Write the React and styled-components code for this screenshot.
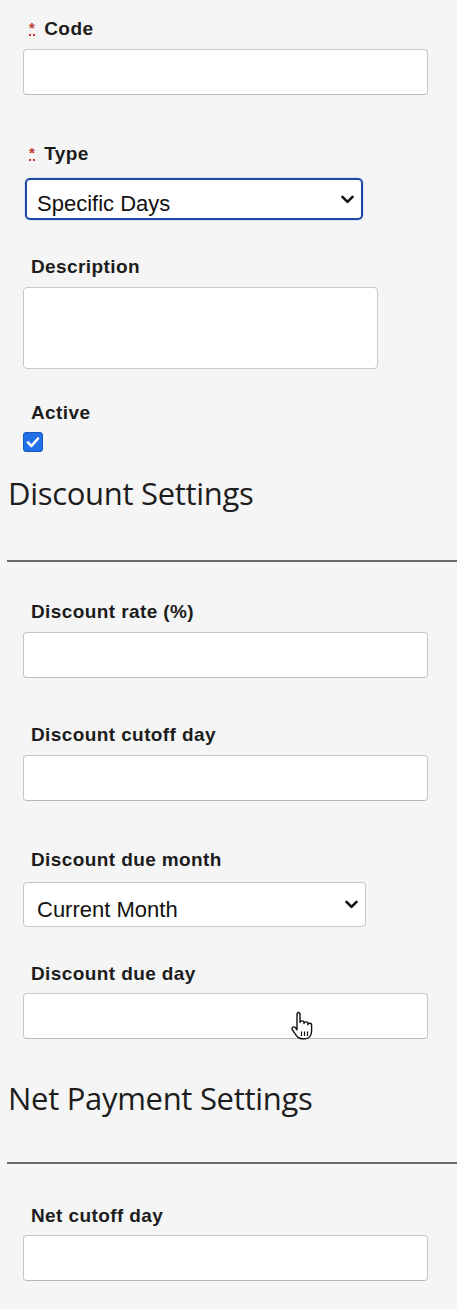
import React from 'react';
import styled, { createGlobalStyle } from 'styled-components';

const GlobalStyle = createGlobalStyle`
  html, body {
    margin: 0;
    padding: 0;
    background: #f5f5f5;
  }
  * {
    box-sizing: border-box;
  }
`;

function Chevron() {
  return (
    <svg width="13" height="9" viewBox="0 0 13 9">
      <polyline points="1.5,1.8 6.5,6.8 11.5,1.8" fill="none" stroke="#111" strokeWidth="2.6" strokeLinecap="round" strokeLinejoin="round" />
    </svg>
  );
}

function HandCursor() {
  return (
    <svg width="23" height="30" viewBox="0 0 23 30">
      <path
        d="M7 1.5c1.2 0 2 .9 2 2v8c0-1 .9-1.6 2-1.6s2 .6 2 1.6v1c0-1 .9-1.6 2-1.6s2 .6 2 1.6v1.2c0-.9.8-1.5 1.8-1.5s1.8.6 1.8 1.6v6.4c0 4.2-2.6 7.6-6.4 7.6h-3.4c-2.6 0-4.2-1.4-5.6-3.4l-3.8-5.6c-.6-.9-.4-2.1.5-2.6.9-.5 2-.2 2.6.6l1.5 2V3.5c0-1.1.8-2 2-2z"
        fill="#fff"
        stroke="#111"
        strokeWidth="1.4"
        strokeLinejoin="round"
      />
      <line x1="10.5" y1="20.5" x2="10.5" y2="25" stroke="#111" strokeWidth="1.2" />
      <line x1="13.5" y1="20.5" x2="13.5" y2="25" stroke="#111" strokeWidth="1.2" />
      <line x1="16.5" y1="20.5" x2="16.5" y2="25" stroke="#111" strokeWidth="1.2" />
    </svg>
  );
}

export default function App() {
  return (
    <>
      <GlobalStyle />
      <Page>
        <Field $mb={48}>
          <Label>
            <Req title="required">*</Req>Code
          </Label>
          <TextInput />
        </Field>

        <Field $mb={36}>
          <Label $gap={13}>
            <Req title="required">*</Req>Type
          </Label>
          <SelectBox $focused $width={338} $height={42} $left={25}>
            <SelectText>Specific Days</SelectText>
            <Chevron />
          </SelectBox>
        </Field>

        <Field $mb={33}>
          <Label>Description</Label>
          <TextArea />
        </Field>

        <Field $mb={20}>
          <Label $gap={8}>Active</Label>
          <CheckBox>
            <svg width="14" height="12" viewBox="0 0 14 12">
              <polyline points="2,6.5 5.5,10 12,2.5" fill="none" stroke="#fff" strokeWidth="2.6" strokeLinecap="round" strokeLinejoin="round" />
            </svg>
          </CheckBox>
        </Field>

        <Heading>Discount Settings</Heading>
        <Rule $mt={46} $mb={39} />

        <Field $mb={46}>
          <Label>Discount rate (%)</Label>
          <TextInput />
        </Field>

        <Field $mb={48}>
          <Label>Discount cutoff day</Label>
          <TextInput />
        </Field>

        <Field $mb={36}>
          <Label $gap={11}>Discount due month</Label>
          <SelectBox $width={343} $height={45} $left={23}>
            <SelectText>Current Month</SelectText>
            <Chevron />
          </SelectBox>
        </Field>

        <Field $mb={38}>
          <Label $gap={8}>Discount due day</Label>
          <InputWrap>
            <TextInput />
            <Cursor>
              <HandCursor />
            </Cursor>
          </InputWrap>
        </Field>

        <Heading>Net Payment Settings</Heading>
        <Rule $mt={43} $mb={41} />

        <Field $mb={28}>
          <Label $gap={8}>Net cutoff day</Label>
          <TextInput />
        </Field>
      </Page>
    </>
  );
}

const Page = styled.div`
  display: flex;
  flex-direction: column;
  width: 457px;
  min-height: 1309px;
  padding-top: 18px;
  font-family: "Liberation Sans", Arial, sans-serif;
  color: #1b1b1b;
`;

const Field = styled.div`
  display: flex;
  flex-direction: column;
  margin-bottom: ${(p) => p.$mb || 0}px;
`;

const Label = styled.label`
  display: flex;
  align-items: flex-start;
  height: 22px;
  line-height: 22px;
  padding-left: 31px;
  margin-bottom: ${(p) => (p.$gap != null ? p.$gap : 9)}px;
  font-size: 19px;
  font-weight: 700;
  letter-spacing: 0.4px;
  color: #1c1c1c;
`;

const Req = styled.abbr`
  margin-left: -2px;
  margin-right: 9px;
  font-size: 15px;
  line-height: 20px;
  color: #c23934;
  text-decoration: none;
  border-bottom: 2px dotted #c23934;
  height: 18px;
  cursor: help;
`;

const TextInput = styled.input`
  display: block;
  width: 405px;
  height: 46px;
  margin-left: 23px;
  border: 1px solid #c6c6c6;
  border-bottom-color: #b9b9b9;
  border-radius: 4px;
  background: #ffffff;
  font-family: "Liberation Sans", Arial, sans-serif;
  font-size: 20px;
  outline: none;
`;

const TextArea = styled.textarea`
  display: block;
  width: 355px;
  height: 82px;
  margin: 0 0 0 23px;
  border: 1px solid #c9c9c9;
  border-radius: 4px;
  background: #ffffff;
  resize: none;
  outline: none;
`;

const SelectBox = styled.div`
  display: flex;
  align-items: center;
  justify-content: space-between;
  width: ${(p) => p.$width}px;
  height: ${(p) => p.$height}px;
  margin-left: ${(p) => p.$left}px;
  padding: 0 7px 0 ${(p) => (p.$focused ? 10 : 13)}px;
  background: #ffffff;
  border: ${(p) => (p.$focused ? '2px solid #1c4aa3' : '1px solid #c6c6c6')};
  border-radius: ${(p) => (p.$focused ? 5 : 4)}px;
  box-shadow: ${(p) => (p.$focused ? '0 0 0 1px #d7e3f6' : 'none')};
`;

const SelectText = styled.span`
  padding-top: 10px;
  font-size: 22px;
  color: #111;
`;

const CheckBox = styled.span`
  display: flex;
  align-items: center;
  justify-content: center;
  width: 20px;
  height: 20px;
  margin-left: 23px;
  border-radius: 3px;
  background: #1e6fe8;
  border: 1px solid #1759c4;
`;

const Heading = styled.h2`
  margin: 0 0 0 8px;
  height: 42px;
  line-height: 42px;
  font-family: "Open Sans", "Noto Sans", sans-serif;
  font-size: 31px;
  font-weight: 400;
  color: #1d1d1d;
  letter-spacing: -0.3px;
`;

const Rule = styled.hr`
  width: 450px;
  height: 2px;
  margin: ${(p) => p.$mt}px 0 ${(p) => p.$mb}px 7px;
  border: none;
  background: #6a6a6a;
`;

const InputWrap = styled.div`
  position: relative;
`;

const Cursor = styled.div`
  position: absolute;
  left: 291px;
  top: 18px;
  pointer-events: none;
`;
